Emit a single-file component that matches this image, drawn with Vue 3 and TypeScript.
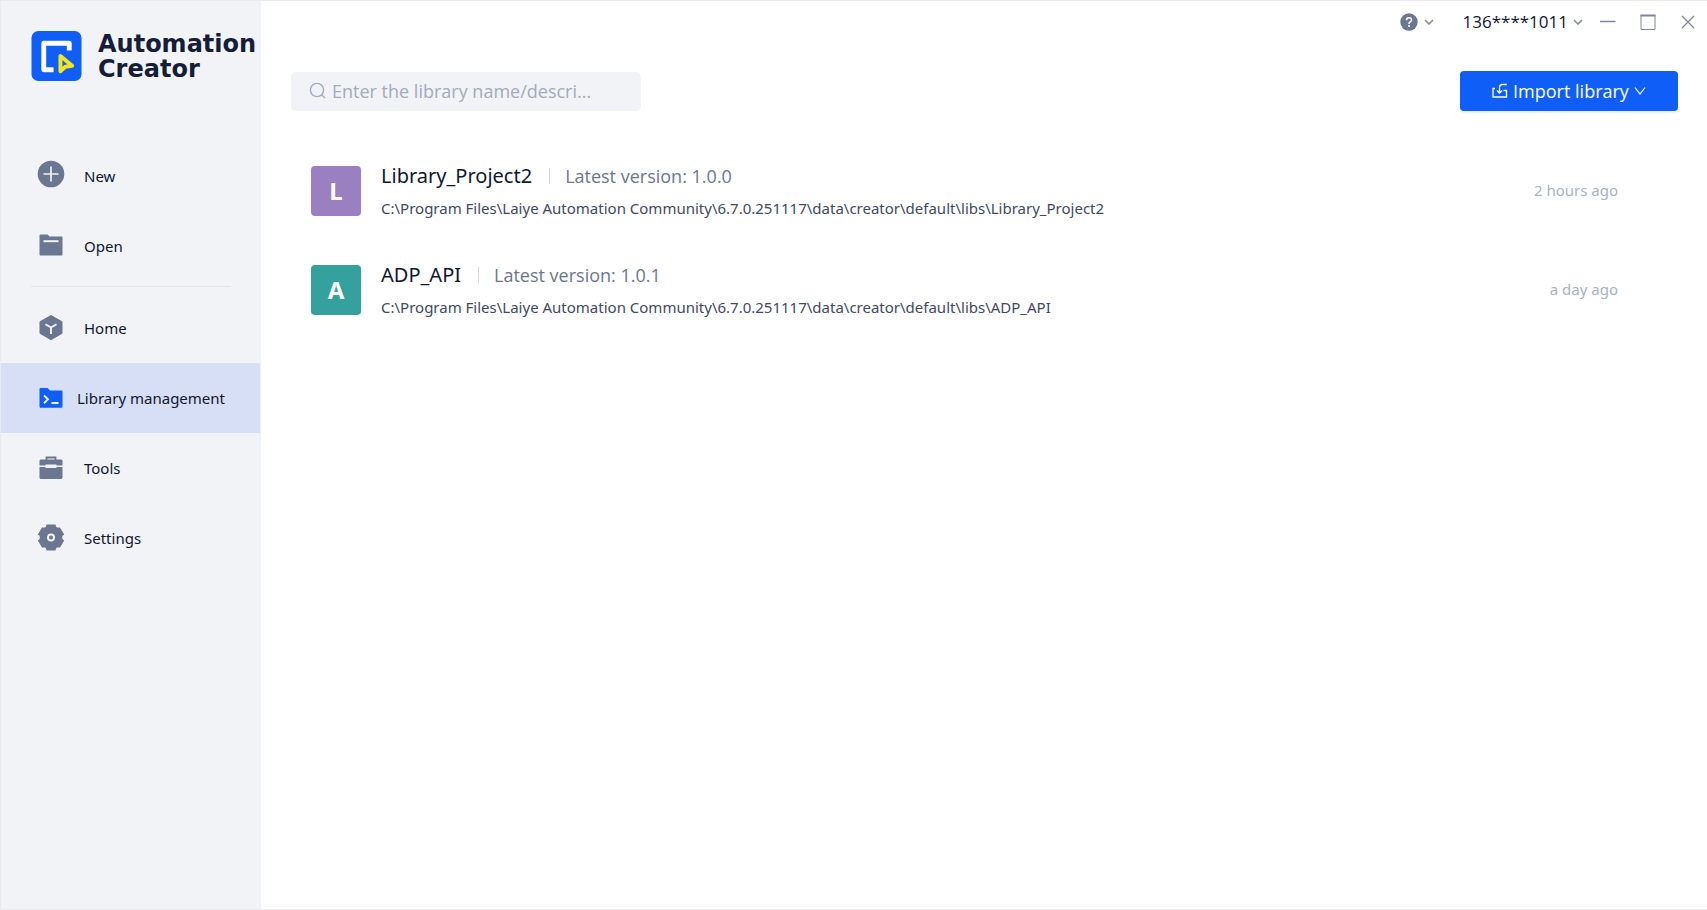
<script setup lang="ts">
import { ref } from 'vue'

interface NavItem {
  id: string
  label: string
}
interface Library {
  name: string
  version: string
  path: string
  updated: string
  color: string
}

const actions: NavItem[] = [
  { id: 'new', label: 'New' },
  { id: 'open', label: 'Open' },
]
const pages: NavItem[] = [
  { id: 'home', label: 'Home' },
  { id: 'library', label: 'Library management' },
  { id: 'tools', label: 'Tools' },
  { id: 'settings', label: 'Settings' },
]
const active = ref('library')
const query = ref('')

const root = 'C:\\Program Files\\Laiye Automation Community\\6.7.0.251117\\data\\creator\\default\\libs\\'
const libraries: Library[] = [
  { name: 'Library_Project2', version: '1.0.0', path: root + 'Library_Project2', updated: '2 hours ago', color: '#9a7fc1' },
  { name: 'ADP_API', version: '1.0.1', path: root + 'ADP_API', updated: 'a day ago', color: '#34a19e' },
]
</script>

<template>
  <div class="window">
    <aside class="sidebar">
      <div class="brand">
        <svg class="logo" viewBox="0 0 51 51" aria-hidden="true">
          <rect width="51" height="51" rx="7" fill="#0f5ef7" />
          <path d="M38.500 20V12.500H12.500V39.500H22.500" fill="none" stroke="#fff" stroke-width="5" stroke-linejoin="round" />
          <path d="M29.500 25.500V41L34.500 36.500L41.500 35.500Z" fill="none" stroke="#f5e51b" stroke-width="4" stroke-linejoin="round" />
        </svg>
        <div class="brand-name">Automation<br />Creator</div>
      </div>

      <nav class="nav">
        <button v-for="item in actions" :key="item.id" type="button" class="nav-item">
          <svg v-if="item.id === 'new'" class="icon" viewBox="0 0 28 28" aria-hidden="true">
            <circle cx="14" cy="12" r="13.300" fill="#6b7690" />
            <path d="M14 4.500V19.500M6.500 12H21.500" stroke="#f1f3f7" stroke-width="1.700" />
          </svg>
          <svg v-else class="icon" viewBox="0 0 28 28" aria-hidden="true">
            <path d="M3.500 2.500H10.500L12.500 4.500H24.500Q25.500 4.500 25.500 5.500V22.500Q25.500 23.500 24.500 23.500H3.500Q2.500 23.500 2.500 22.500V3.500Q2.500 2.500 3.500 2.500Z" fill="#6b7690" />
            <path d="M6.500 9.200H21.500" stroke="#f1f3f7" stroke-width="2" />
          </svg>
          <span>{{ item.label }}</span>
        </button>
        <hr class="separator" />
        <button
          v-for="item in pages"
          :key="item.id"
          type="button"
          class="nav-item"
          :class="{ active: active === item.id }"
          @click="active = item.id"
        >
          <svg v-if="item.id === 'home'" class="icon" viewBox="0 0 28 28" aria-hidden="true">
            <path d="M14 1L24.700 7Q25.500 7.500 25.500 8.500V18.500Q25.500 19.500 24.700 20L14 26.300L3.300 20Q2.500 19.500 2.500 18.500V8.500Q2.500 7.500 3.300 7Z" fill="#6b7690" />
            <path d="M8.500 10.300L14 13.500L19.500 10.300M14 13.500V20" fill="none" stroke="#f1f3f7" stroke-width="1.900" />
          </svg>
          <svg v-else-if="item.id === 'library'" class="icon" viewBox="0 0 28 28" aria-hidden="true">
            <path d="M3.500 4H10.500L13 6.500H24.500Q25.500 6.500 25.500 7.500V22.500Q25.500 23.700 24.500 23.700H3.500Q2.500 23.700 2.500 22.500V5Q2.500 4 3.500 4Z" fill="#0f5ef7" />
            <path d="M7 11.500L11 15.300L7 19.200M14.500 19H21.500" fill="none" stroke="#f1f3f7" stroke-width="1.900" />
          </svg>
          <svg v-else-if="item.id === 'tools'" class="icon" viewBox="0 0 28 28" aria-hidden="true">
            <path d="M9.500 6V3.500H18.500V6" fill="none" stroke="#6b7690" stroke-width="1.800" />
            <path d="M3.500 5.500H24.500L25.500 6.500V11.500H19.500V10.500H8.500V11.500H2.500V6.500Z" fill="#6b7690" />
            <path d="M2.500 13H8.500V14H19.500V13H25.500V24L24.500 25H3.500L2.500 24Z" fill="#6b7690" />
          </svg>
          <svg v-else class="icon" viewBox="0 0 28 28" aria-hidden="true">
            <path d="M9.500 0.500H18.500L19 2.500L20 3.500L23 3.500L27.200 10.500L25.300 12V15L27.200 16.500L23 23.500L20 23.500L19 24.500L18.500 26.500H9.500L9 24.500L8 23.500L5 23.500L0.800 16.500L2.700 15V12L0.800 10.500L5 3.500L8 3.500L9 2.500Z" fill="#6b7690" />
            <circle cx="14" cy="13.500" r="3" fill="none" stroke="#f1f3f7" stroke-width="2" />
          </svg>
          <span>{{ item.label }}</span>
        </button>
      </nav>
    </aside>

    <main class="content">
      <header class="titlebar">
        <button type="button" class="bar-button help" aria-label="Help">
          <svg width="18" height="18" viewBox="0 0 18 18" aria-hidden="true">
            <circle cx="9" cy="9" r="8.700" fill="#6b7690" />
            <path d="M6.500 7.300Q6.500 4.800 9 4.800Q11.500 4.800 11.500 6.900Q11.500 8.200 10 9Q9 9.600 9 10.900" fill="none" stroke="#fff" stroke-width="1.500" />
            <circle cx="9" cy="13" r="1" fill="#fff" />
          </svg>
          <svg class="chevron" width="10" height="6" viewBox="0 0 10 6" aria-hidden="true"><path d="M1 1L5 5L9 1" /></svg>
        </button>
        <button type="button" class="bar-button account">
          <span>136****1011</span>
          <svg class="chevron" width="10" height="6" viewBox="0 0 10 6" aria-hidden="true"><path d="M1 1L5 5L9 1" /></svg>
        </button>
        <div class="controls">
          <button type="button" class="bar-button" aria-label="Minimize">
            <svg width="16" height="16" viewBox="0 0 16 16" aria-hidden="true"><path d="M0 7.500H15.500" stroke="#7c869d" stroke-width="1.500" /></svg>
          </button>
          <button type="button" class="bar-button" aria-label="Maximize">
            <svg width="16" height="16" viewBox="0 0 16 16" aria-hidden="true"><path d="M1 1V15.500H15V1" fill="none" stroke="#7c869d" /><path d="M0.500 1.500H15.500" stroke="#7c869d" stroke-width="2" /></svg>
          </button>
          <button type="button" class="bar-button" aria-label="Close">
            <svg width="16" height="16" viewBox="0 0 16 16" aria-hidden="true"><path d="M2 2L14 14M14 2L2 14" stroke="#7c869d" stroke-width="1.300" /></svg>
          </button>
        </div>
      </header>

      <div class="toolbar">
        <label class="search">
          <svg width="18" height="18" viewBox="0 0 18 18" aria-hidden="true">
            <circle cx="8" cy="8" r="6.600" fill="none" stroke="#a3abbd" stroke-width="1.400" />
            <path d="M12.700 12.700L16 16" stroke="#a3abbd" stroke-width="1.400" />
          </svg>
          <input v-model="query" type="text" placeholder="Enter the library name/descri..." aria-label="Search libraries" />
        </label>
        <button type="button" class="import">
          <svg width="16" height="16" viewBox="0 0 16 16" aria-hidden="true">
            <path d="M3 5.500H1V14H14.500V7.500H11.500M14.800 1.500H10.500Q7.500 1.500 7.500 4.500V10M5 7.500L7.500 10L10 7.500" fill="none" stroke="#fff" stroke-width="1.300" />
          </svg>
          <span>Import library</span>
          <svg width="12" height="8" viewBox="0 0 12 8" aria-hidden="true"><path d="M1 0.500L6 7L11 0.500" fill="none" stroke="#fff" stroke-width="1.200" /></svg>
        </button>
      </div>

      <ul class="list">
        <li v-for="lib in libraries" :key="lib.name" class="row">
          <div class="avatar" :style="{ backgroundColor: lib.color }">{{ lib.name[0] }}</div>
          <div class="info">
            <div class="heading">
              <span class="name">{{ lib.name }}</span>
              <span class="version">Latest version: {{ lib.version }}</span>
            </div>
            <div class="path">{{ lib.path }}</div>
          </div>
          <time class="updated">{{ lib.updated }}</time>
        </li>
      </ul>
    </main>
  </div>
</template>

<style>
body {
  margin: 0;
}
</style>

<style scoped>
.window {
  display: flex;
  box-sizing: border-box;
  min-height: 100vh;
  border: 1px solid #ebebed;
  border-right: 0;
  background: #fff;
  color: #0f1730;
  font-family: "Noto Sans", "Open Sans", sans-serif;
  font-size: 15px;
}
button,
input {
  font: inherit;
}
button {
  padding: 0;
  border: 0;
  background: none;
  color: inherit;
  cursor: pointer;
}
.sidebar {
  box-sizing: border-box;
  flex: 0 0 260px;
  border-right: 1px solid #eff1f5;
  background: #f1f3f7;
}
.brand {
  display: flex;
  gap: 16px;
  padding: 30px 0 0 30px;
}
.logo {
  flex: none;
  width: 51px;
  height: 50px;
}
.brand-name {
  padding-top: 1px;
  font-family: "DejaVu Sans", sans-serif;
  font-size: 24px;
  font-weight: 700;
  line-height: 25px;
  color: #161d38;
}
.nav {
  margin-top: 59px;
}
.nav-item {
  display: flex;
  align-items: center;
  gap: 19px;
  width: 100%;
  height: 70px;
  padding-left: 36px;
  white-space: nowrap;
}
.nav-item.active {
  gap: 12px;
  background: #d7dff6;
}
.icon {
  flex: none;
  width: 28px;
  height: 28px;
  overflow: visible;
}
.separator {
  height: 1px;
  margin: 5px 29px 6px 30px;
  border: 0;
  background: #dfe2e8;
}
.content {
  flex: 1;
  min-width: 0;
}
.titlebar {
  display: flex;
  align-items: center;
  justify-content: flex-end;
  height: 41px;
  padding-right: 11px;
}
.bar-button {
  display: flex;
  align-items: center;
}
.chevron {
  fill: none;
  stroke: #7c869d;
  stroke-width: 1.500;
}
.help {
  gap: 6px;
  margin-right: 29px;
}
.account {
  gap: 5px;
  margin-right: 17px;
  font-family: "Open Sans", sans-serif;
  font-size: 17px;
}
.controls {
  display: flex;
  gap: 24px;
}
.toolbar {
  display: flex;
  align-items: center;
  justify-content: space-between;
  padding: 29px 29px 0 30px;
  font-family: "Open Sans", sans-serif;
}
.search {
  display: flex;
  align-items: center;
  gap: 5px;
  box-sizing: border-box;
  width: 350px;
  height: 39px;
  padding: 0 18px;
  border-radius: 5px;
  background: #f1f3f7;
}
.search input {
  flex: 1;
  min-width: 0;
  padding: 0;
  border: 0;
  outline: 0;
  background: none;
  font-size: 18px;
}
.search input::placeholder {
  color: #a3abbd;
  opacity: 1;
}
.import {
  display: flex;
  align-items: center;
  justify-content: center;
  gap: 5px;
  width: 218px;
  height: 40px;
  border-radius: 4px;
  background: #0f5ef7;
  box-shadow: 0 2px 2px #eaf1fe;
  color: #fff;
  font-size: 18px;
}
.list {
  margin: 0;
  padding: 30px 89px 0 50px;
  list-style: none;
}
.row {
  display: flex;
  align-items: center;
  height: 99px;
}
.avatar {
  display: flex;
  flex: none;
  align-items: center;
  justify-content: center;
  width: 50px;
  height: 50px;
  border-radius: 4px;
  color: #fff;
  font-size: 24px;
  font-weight: 700;
}
.info {
  flex: 1;
  min-width: 0;
  margin-left: 20px;
  padding-top: 2px;
}
.heading {
  display: flex;
  align-items: center;
  height: 32px;
}
.name {
  font-size: 20px;
}
.version {
  margin-left: 17px;
  padding-left: 15px;
  border-left: 1px solid #d3d8e2;
  color: #6b7690;
  font-family: "Open Sans", sans-serif;
  font-size: 18px;
  line-height: 16px;
}
.path {
  color: #414a61;
  line-height: 32px;
}
.updated {
  padding-bottom: 2px;
  color: #a9b1c4;
}
</style>
